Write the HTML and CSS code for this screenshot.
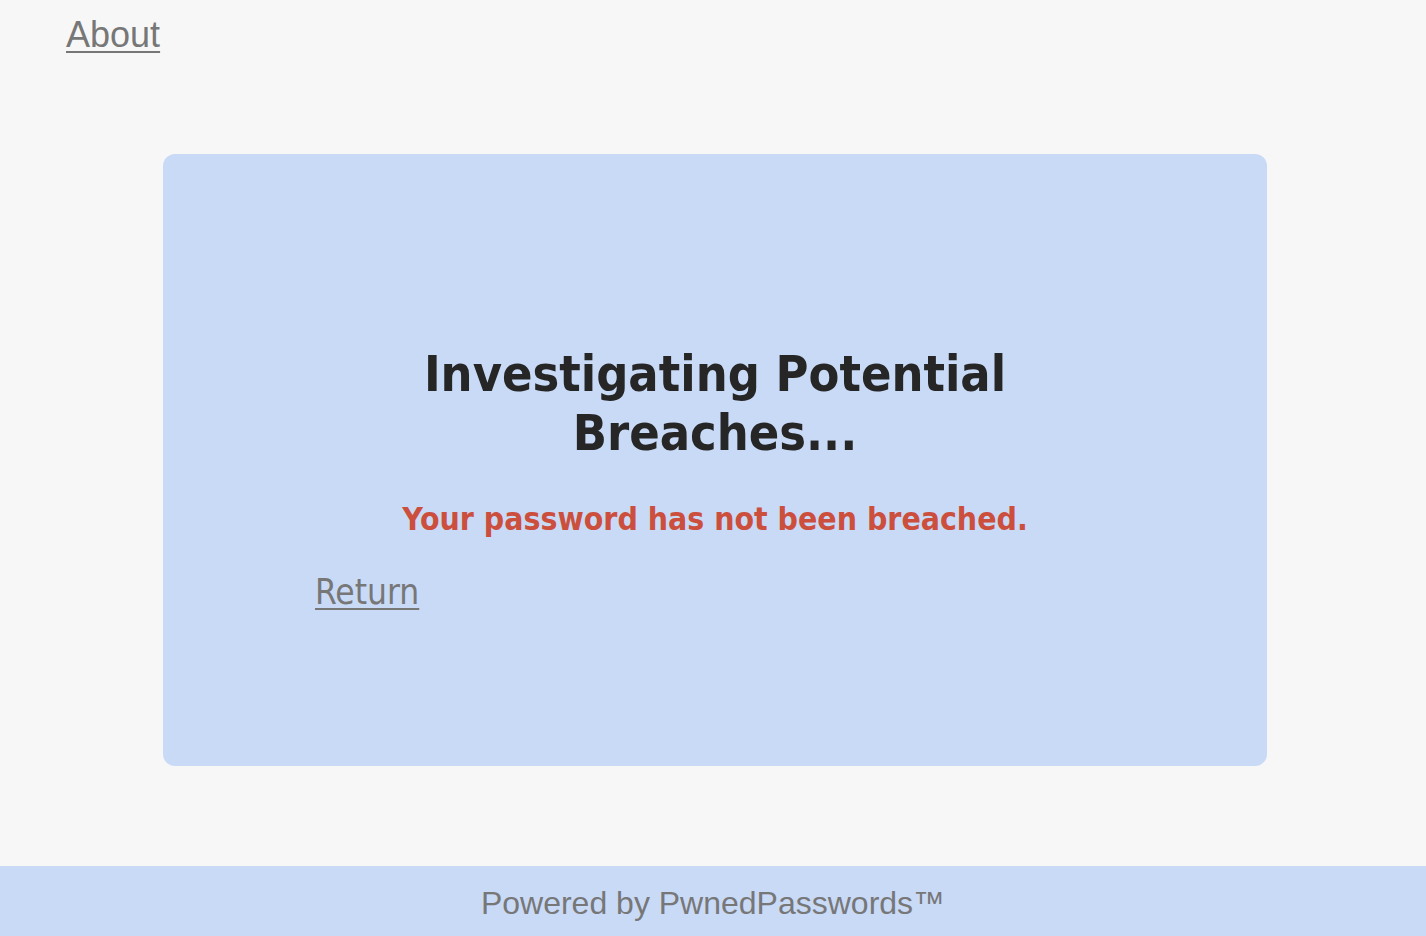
FILE: index.html
```html
<!DOCTYPE html>
<html lang="en">
<head>
<meta charset="utf-8">
<title>Investigating Potential Breaches</title>
<link rel="stylesheet" href="styles.css">
</head>
<body>
<header class="top-nav">
  <a class="nav-link" href="#">About</a>
</header>
<main class="page">
  <section class="card">
    <div class="card-inner">
      <h1 class="title">Investigating Potential Breaches...</h1>
      <p class="result">Your password has not been breached.</p>
      <a class="return-link" href="#">Return</a>
    </div>
  </section>
</main>
<footer class="site-footer">Powered by PwnedPasswords™</footer>
</body>
</html>
```
FILE: styles.css
```css
html, body {
  margin: 0;
  padding: 0;
}
body {
  background: #f7f7f7;
  font-family: "Liberation Sans", Arial, sans-serif;
}
.top-nav {
  height: 154px;
  box-sizing: border-box;
  padding: 14px 0 0 66px;
}
.nav-link {
  color: #777777;
  font-size: 36px;
  text-decoration: underline;
  text-decoration-thickness: 2px;
  text-underline-offset: 4px;
}
.page {
  display: flex;
  justify-content: flex-start;
  padding: 0 0 100px 163px;
}
.card {
  width: 1104px;
  height: 612px;
  box-sizing: border-box;
  background: #c9daf7;
  border-radius: 12px;
  padding-top: 191px;
}
.card-inner {
  width: 800px;
  margin: 0 auto;
  font-family: "DejaVu Sans Condensed", "DejaVu Sans", sans-serif;
}
.title {
  margin: 0;
  text-align: center;
  font-size: 50px;
  line-height: 59px;
  font-weight: bold;
  color: #262626;
  padding: 0 80px;
}
.result {
  margin: 38px 0 0;
  text-align: center;
  font-size: 31.7px;
  font-weight: bold;
  color: #cc4f3d;
}
.return-link {
  display: inline-block;
  margin-top: 35px;
  font-size: 35px;
  color: #777777;
  text-decoration: underline;
  text-decoration-thickness: 2px;
  text-underline-offset: 4px;
}
.site-footer {
  background: #c9daf7;
  height: 70px;
  box-sizing: border-box;
  padding-top: 19px;
  text-align: center;
  font-size: 32px;
  color: #777777;
}
```
